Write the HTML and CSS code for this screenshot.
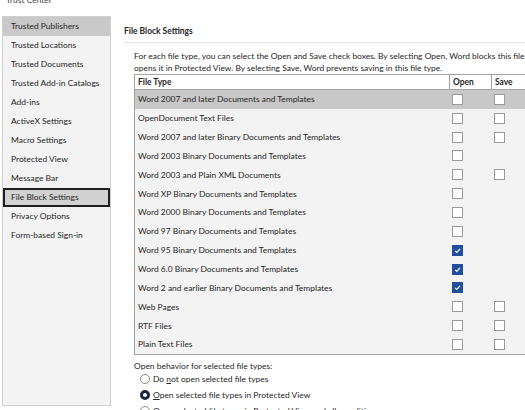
FILE: index.html
```html
<!DOCTYPE html>
<html>
<head>
<meta charset="utf-8">
<link rel="stylesheet" href="styles.css">
</head>
<body>
<div class="title">Trust Center</div>
<div class="main">
  <nav class="nav">
    <div class="item hover">Trusted Publishers</div>
    <div class="item">Trusted Locations</div>
    <div class="item">Trusted Documents</div>
    <div class="item">Trusted Add-in Catalogs</div>
    <div class="item">Add-ins</div>
    <div class="item">ActiveX Settings</div>
    <div class="item">Macro Settings</div>
    <div class="item">Protected View</div>
    <div class="item">Message Bar</div>
    <div class="item selected">File Block Settings</div>
    <div class="item">Privacy Options</div>
    <div class="item">Form-based Sign-in</div>
  </nav>
  <section class="pane">
    <h1 class="heading">File Block Settings</h1>
    <div class="content">
      <p class="desc">For each file type, you can select the Open and Save check boxes. By selecting Open, Word blocks this file type, or<br>opens it in Protected View. By selecting Save, Word prevents saving in this file type.</p>
      <div class="table">
        <div class="row head">
          <div class="c-type">File Type</div>
          <div class="c-open">Open</div>
          <div class="c-save">Save</div>
        </div>
        <div class="row active">
          <div class="c-type">Word 2007 and later Documents and Templates</div>
          <div class="c-open"><span class="cb"></span></div>
          <div class="c-save"><span class="cb"></span></div>
        </div>
        <div class="row">
          <div class="c-type">OpenDocument Text Files</div>
          <div class="c-open"><span class="cb"></span></div>
          <div class="c-save"><span class="cb"></span></div>
        </div>
        <div class="row">
          <div class="c-type">Word 2007 and later Binary Documents and Templates</div>
          <div class="c-open"><span class="cb"></span></div>
          <div class="c-save"><span class="cb"></span></div>
        </div>
        <div class="row">
          <div class="c-type">Word 2003 Binary Documents and Templates</div>
          <div class="c-open"><span class="cb"></span></div>
          <div class="c-save"></div>
        </div>
        <div class="row">
          <div class="c-type">Word 2003 and Plain XML Documents</div>
          <div class="c-open"><span class="cb"></span></div>
          <div class="c-save"><span class="cb"></span></div>
        </div>
        <div class="row">
          <div class="c-type">Word XP Binary Documents and Templates</div>
          <div class="c-open"><span class="cb"></span></div>
          <div class="c-save"></div>
        </div>
        <div class="row">
          <div class="c-type">Word 2000 Binary Documents and Templates</div>
          <div class="c-open"><span class="cb"></span></div>
          <div class="c-save"></div>
        </div>
        <div class="row">
          <div class="c-type">Word 97 Binary Documents and Templates</div>
          <div class="c-open"><span class="cb"></span></div>
          <div class="c-save"></div>
        </div>
        <div class="row">
          <div class="c-type">Word 95 Binary Documents and Templates</div>
          <div class="c-open"><span class="cb checked"><svg viewBox="0 0 10 10"><path d="M2.3 5.4 L4.2 7.1 L7.8 3.2" fill="none" stroke="#fff" stroke-width="1.4"/></svg></span></div>
          <div class="c-save"></div>
        </div>
        <div class="row">
          <div class="c-type">Word 6.0 Binary Documents and Templates</div>
          <div class="c-open"><span class="cb checked"><svg viewBox="0 0 10 10"><path d="M2.3 5.4 L4.2 7.1 L7.8 3.2" fill="none" stroke="#fff" stroke-width="1.4"/></svg></span></div>
          <div class="c-save"></div>
        </div>
        <div class="row">
          <div class="c-type">Word 2 and earlier Binary Documents and Templates</div>
          <div class="c-open"><span class="cb checked"><svg viewBox="0 0 10 10"><path d="M2.3 5.4 L4.2 7.1 L7.8 3.2" fill="none" stroke="#fff" stroke-width="1.4"/></svg></span></div>
          <div class="c-save"></div>
        </div>
        <div class="row">
          <div class="c-type">Web Pages</div>
          <div class="c-open"><span class="cb"></span></div>
          <div class="c-save"><span class="cb"></span></div>
        </div>
        <div class="row">
          <div class="c-type">RTF Files</div>
          <div class="c-open"><span class="cb"></span></div>
          <div class="c-save"><span class="cb"></span></div>
        </div>
        <div class="row">
          <div class="c-type">Plain Text Files</div>
          <div class="c-open"><span class="cb"></span></div>
          <div class="c-save"><span class="cb"></span></div>
        </div>
      </div>
      <div class="behavior">
        <div class="label">Open behavior for selected file types:</div>
        <div class="opt"><span class="radio"></span><span>Do <u>n</u>ot open selected file types</span></div>
        <div class="opt"><span class="radio on"></span><span><u>O</u>pen selected file types in Protected View</span></div>
        <div class="opt"><span class="radio"></span><span>Open selected file types in Protected View and <u>a</u>llow editing</span></div>
      </div>
    </div>
  </section>
</div>
</body>
</html>
```

FILE: styles.css
```css
html, body {
  margin: 0;
  padding: 0;
  background: #ffffff;
  width: 525px;
  height: 410px;
  overflow: hidden;
}
body {
  font-family: "Lato", "Liberation Sans", sans-serif;
  font-size: 8.45px;
  color: #262626;
}
.title {
  height: 16px;
  margin-top: -7px;
  padding-left: 6px;
  line-height: 14px;
  color: #444;
  margin-bottom: 7px;
}
.main {
  display: flex;
  align-items: flex-start;
}
.nav {
  margin-left: 2px;
  width: 107px;
  height: 388px;
  border: 1px solid #cfcfcf;
  background: #f3f3f3;
  flex-shrink: 0;
}
.item {
  height: 19px;
  line-height: 19px;
  padding-left: 8px;
  white-space: nowrap;
}
.item.hover {
  background: #c9c9c9;
}
.item.selected {
  background: #d2d2d2;
  box-shadow: inset 0 0 0 2px #202020;
}
.pane {
  margin-left: 13px;
  flex: 1;
  min-width: 0;
  white-space: nowrap;
}
.heading {
  margin: 0;
  font-size: 8.45px;
  font-weight: bold;
  height: 27px;
  line-height: 15px;
  padding-top: 8px;
  box-sizing: border-box;
  border-bottom: 1px solid #e6e6e6;
}
.content {
  padding-left: 10px;
}
.desc {
  margin: 7px 0 0 0;
  line-height: 12px;
}
.table {
  margin-top: 0;
  width: 420px;
  border: 1px solid #a3a3a3;
  background: #f3f3f3;
}
.row {
  display: flex;
  height: 18.85px;
  align-items: center;
}
.row.head {
  height: 14px;
  background: #ffffff;
  font-weight: bold;
  border-bottom: 1px solid #a3a3a3;
  align-items: stretch;
}
.row.head > div {
  display: flex;
  align-items: center;
}
.row.active {
  background: #c8c8c8;
}
.c-type {
  width: 314px;
  padding-left: 3px;
  box-sizing: border-box;
}
.c-open {
  width: 42px;
  padding-left: 3px;
  box-sizing: border-box;
}
.c-save {
  width: 64px;
  padding-left: 3px;
  box-sizing: border-box;
}
.row.head .c-open,
.row.head .c-save {
  border-left: 1px solid #a3a3a3;
}
.cb {
  display: block;
  width: 9px;
  height: 9px;
  border: 1px solid #9a9a9a;
  background: #ffffff;
}
.cb.checked {
  background: #1f4f9c;
  border-color: #1f4f9c;
}
.cb svg {
  display: block;
  width: 9px;
  height: 9px;
}
.behavior {
  padding-top: 6px;
}
.label {
  height: 10px;
  line-height: 10px;
}
.opt {
  display: flex;
  align-items: center;
  gap: 3px;
  height: 16px;
  padding-left: 6px;
}
.radio {
  display: block;
  width: 8px;
  height: 8px;
  border: 1px solid #8a8a8a;
  border-radius: 50%;
  background: #fff;
}
.radio.on {
  width: 4px;
  height: 4px;
  border: 3px solid #1d2540;
}
u {
  text-decoration: underline;
  text-underline-offset: 1px;
}
```
